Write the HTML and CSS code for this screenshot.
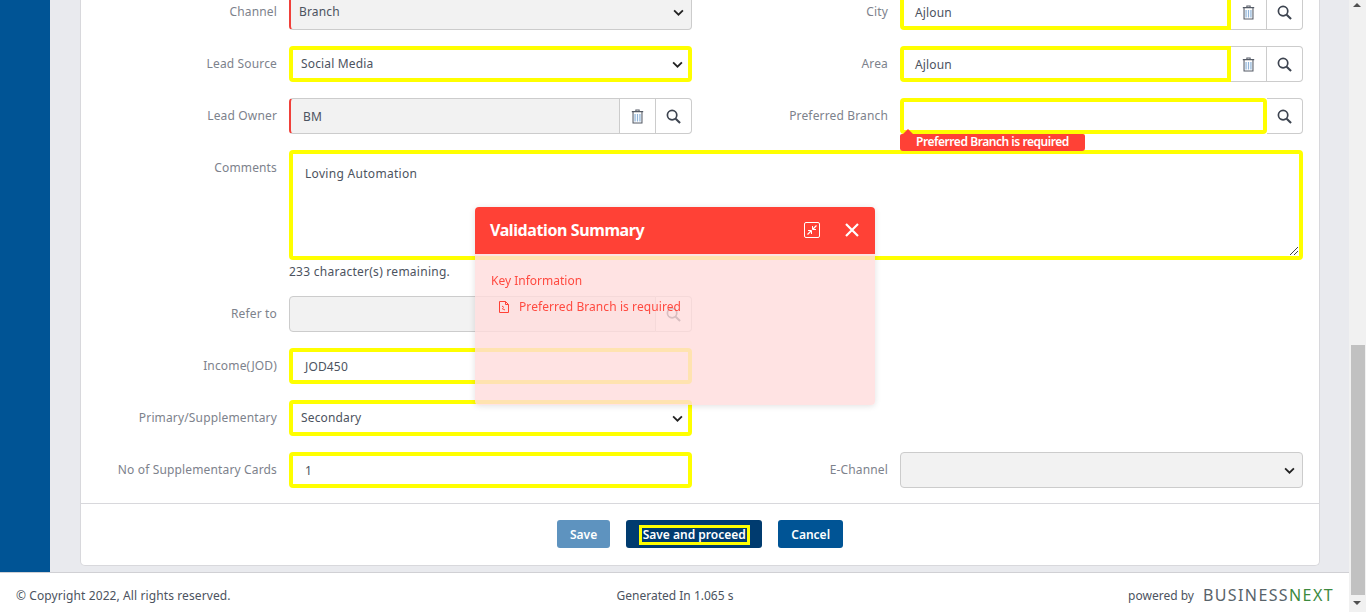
FILE: index.html
```html
<!DOCTYPE html>
<html lang="en">

<head>
    <meta charset="UTF-8">
    <meta name="viewport" content="width=device-width, initial-scale=1.0">
    <title>Lead</title>
    <link rel="stylesheet" href="styles.css">
</head>

<body>
    <svg class="sprite" aria-hidden="true">
        <symbol id="icon-trash" viewBox="0 0 16 18">
            <path d="M6 2.500V1h4v1.500M1 3h14M2.500 3.500V17h11V3.500" fill="none" stroke="#555b66" stroke-width="1.300" />
            <path d="M5 6v9M8 6v9M11 6v9" fill="none" stroke="#8fb4d9" stroke-width="1.500" />
        </symbol>
        <symbol id="icon-search" viewBox="0 0 16 16">
            <circle cx="6.500" cy="6.500" r="5" fill="none" stroke="#3d4450" stroke-width="1.800" />
            <path d="M10.300 10.300L15 15" fill="none" stroke="#3d4450" stroke-width="2.200" />
        </symbol>
        <symbol id="icon-chevron" viewBox="0 0 10 6">
            <path d="M1 1l4 4 4-4" fill="none" stroke="#222" stroke-width="1.600" />
        </symbol>
    </svg>

    <div class="app">
        <aside class="sidebar"></aside>

        <div class="main">
            <div class="content">
                <section class="card">
                    <form class="form-grid">
                        <label class="field-label">Channel</label>
                        <div class="control select required disabled">
                            <span class="value">Branch</span>
                            <svg class="chevron"><use href="#icon-chevron" /></svg>
                        </div>
                        <label class="field-label">City</label>
                        <div class="group">
                            <div class="control highlight flat"><span class="value lookup">Ajloun</span></div>
                            <button type="button" class="addon"><svg class="icon-trash"><use href="#icon-trash" /></svg></button>
                            <button type="button" class="addon end"><svg class="icon-search"><use href="#icon-search" /></svg></button>
                        </div>

                        <label class="field-label">Lead Source</label>
                        <div class="control select highlight">
                            <span class="value">Social Media</span>
                            <svg class="chevron"><use href="#icon-chevron" /></svg>
                        </div>
                        <label class="field-label">Area</label>
                        <div class="group">
                            <div class="control highlight flat"><span class="value lookup">Ajloun</span></div>
                            <button type="button" class="addon"><svg class="icon-trash"><use href="#icon-trash" /></svg></button>
                            <button type="button" class="addon end"><svg class="icon-search"><use href="#icon-search" /></svg></button>
                        </div>

                        <label class="field-label">Lead Owner</label>
                        <div class="group">
                            <div class="control required disabled flat"><span class="value lookup">BM</span></div>
                            <button type="button" class="addon"><svg class="icon-trash"><use href="#icon-trash" /></svg></button>
                            <button type="button" class="addon end"><svg class="icon-search"><use href="#icon-search" /></svg></button>
                        </div>
                        <label class="field-label">Preferred Branch</label>
                        <div class="group">
                            <div class="control highlight"></div>
                            <button type="button" class="addon end"><svg class="icon-search"><use href="#icon-search" /></svg></button>
                            <div class="error-tip">Preferred Branch is required</div>
                        </div>

                        <label class="field-label">Comments</label>
                        <div class="comments">
                            <div class="control highlight textarea">
                                <span class="value lookup">Loving Automation</span>
                                <svg class="resize" viewBox="0 0 8 8"><path d="M0 8L8 0M4 8l4-4" stroke="#444" fill="none" /></svg>
                            </div>
                            <p class="hint">233 character(s) remaining.</p>
                        </div>

                        <label class="field-label">Refer to</label>
                        <div class="group">
                            <div class="control disabled flat"></div>
                            <button type="button" class="addon end"><svg class="icon-search"><use href="#icon-search" /></svg></button>
                        </div>

                        <label class="field-label row-start">Income(JOD)</label>
                        <div class="control highlight"><span class="value lookup">JOD450</span></div>

                        <label class="field-label row-start">Primary/Supplementary</label>
                        <div class="control select highlight">
                            <span class="value">Secondary</span>
                            <svg class="chevron"><use href="#icon-chevron" /></svg>
                        </div>

                        <label class="field-label row-start">No of Supplementary Cards</label>
                        <div class="control highlight"><span class="value lookup">1</span></div>
                        <label class="field-label">E-Channel</label>
                        <div class="control select disabled">
                            <span class="value"></span>
                            <svg class="chevron"><use href="#icon-chevron" /></svg>
                        </div>
                    </form>

                    <div class="actions">
                        <button type="button" class="btn btn-muted">Save</button>
                        <button type="button" class="btn btn-dark"><span class="marked">Save and proceed</span></button>
                        <button type="button" class="btn">Cancel</button>
                    </div>
                </section>
            </div>

            <footer class="footer">
                <span class="copy">© Copyright 2022, All rights reserved.</span>
                <span class="generated">Generated In 1.065 s</span>
                <span class="powered">powered by <span class="brand">BUSINESS<span class="brand-next">NEXT</span></span></span>
            </footer>
        </div>

        <div class="scrollbar">
            <span class="arrow up"></span>
            <div class="track"><div class="thumb"></div></div>
            <span class="arrow down"></span>
        </div>
    </div>

    <div class="summary">
        <div class="summary-head">
            <h3>Validation Summary</h3>
            <svg class="head-icon" viewBox="0 0 16 16">
                <rect x="0.500" y="0.500" width="15" height="15" rx="1.500" fill="none" stroke="#fff" />
                <path d="M3.500 12.500L7 9M9 7l3.500-3.500" stroke="#fff" stroke-width="1.300" fill="none" />
                <path d="M4 8.500h3.500V12M8.500 4v3.500H12" stroke="#fff" fill="none" />
            </svg>
            <svg class="head-close" viewBox="0 0 14 14">
                <path d="M1 1l12 12M13 1L1 13" stroke="#fff" stroke-width="2.200" fill="none" />
            </svg>
        </div>
        <div class="summary-body">
            <h4>Key Information</h4>
            <p class="summary-item">
                <svg viewBox="0 0 10 12">
                    <path d="M.5.500h6l3 3v8h-9zM6.500.500v3h3" fill="none" stroke="#ff4136" />
                    <path d="M3 5l2 1.500M3 7.500l3 1.500" stroke="#ff4136" fill="none" />
                </svg>
                Preferred Branch is required
            </p>
        </div>
    </div>
</body>

</html>
```

FILE: styles.css
```css
* {
    box-sizing: border-box;
}

html,
body {
    height: 100%;
    margin: 0;
    overflow: hidden;
}

body {
    font-family: "Noto Sans", "Open Sans", sans-serif;
    font-size: 12px;
    color: #4c5360;
    background: #e9eaee;
}

.sprite {
    display: none;
}

.app {
    display: flex;
    height: 612px;
}

.sidebar {
    width: 50px;
    height: 572px;
    background: #005495;
    flex: none;
}

.main {
    flex: 1;
    min-width: 0;
    display: flex;
    flex-direction: column;
}

.content {
    flex: 1;
    min-height: 0;
    padding: 0 29px 0 30px;
}

.card {
    height: 566px;
    background: #fff;
    border: 1px solid #d8d8dc;
    border-top: 0;
    border-radius: 0 0 5px 5px;
    display: flex;
    flex-direction: column;
}

/* page is scrolled, first row is cut off at the top */
.form-grid {
    display: grid;
    grid-template-columns: 196px 403px 184px 403px;
    align-content: start;
    column-gap: 12px;
    row-gap: 16px;
    margin-top: -6px;
    height: 509px;
    flex: none;
}

.field-label {
    text-align: right;
    color: #7d828c;
    padding-top: 9px;
    line-height: 18px;
    letter-spacing: 0.15px;
}

.row-start {
    grid-column: 1;
}

.control {
    position: relative;
    flex: 1;
    height: 36px;
    display: flex;
    align-items: center;
    background: #fff;
    border: 1px solid #ccc;
    border-radius: 4px;
    min-width: 0;
}

.value {
    padding-left: 9px;
    letter-spacing: 0.15px;
}

.select .value {
    padding-bottom: 2px;
}

.value.lookup {
    padding-left: 11px;
}

.disabled {
    background: #f2f2f2;
}

.required {
    border-left: 2px solid #f0403a;
}

.required .value {
    padding-left: 8px;
}

.required .value.lookup {
    padding-left: 12px;
}

.highlight {
    border: 4px solid #ff0;
}

.highlight .value {
    padding-left: 8px;
}

.highlight .value.lookup {
    padding-left: 12px;
}

.group .highlight .value.lookup {
    padding-left: 11px;
}

.flat {
    border-top-right-radius: 0;
    border-bottom-right-radius: 0;
}

.select {
    justify-content: space-between;
}

.chevron {
    width: 11px;
    height: 7px;
    margin-right: 7px;
}

.highlight .chevron {
    margin-right: 5px;
}

.group {
    position: relative;
    display: flex;
}

.addon {
    width: 36px;
    height: 36px;
    flex: none;
    padding: 0;
    background: #fff;
    border: 1px solid #ccc;
    border-left: 0;
    display: flex;
    align-items: center;
    justify-content: center;
}

.addon.end {
    border-radius: 0 4px 4px 0;
}

.icon-trash {
    width: 13px;
    height: 15px;
}

.icon-search {
    width: 15px;
    height: 15px;
}

.error-tip {
    position: absolute;
    left: 0;
    top: 36px;
    width: 185px;
    height: 17px;
    padding-left: 16px;
    background: #ff4136;
    color: #fff;
    font-size: 12px;
    font-weight: 600;
    letter-spacing: -0.45px;
    line-height: 15px;
    border-radius: 2px 2px 3px 3px;
    z-index: 2;
}

.error-tip::before {
    content: "";
    position: absolute;
    left: 3px;
    top: -5px;
    border: 5px solid transparent;
    border-top: 0;
    border-bottom-color: #ff4136;
}

.comments {
    grid-column: 2 / 5;
    height: 130px;
}

.textarea {
    height: 110px;
    align-items: flex-start;
    padding-top: 11px;
}

.textarea .value.lookup {
    padding-left: 12px;
    letter-spacing: 0.3px;
}

.resize {
    position: absolute;
    right: 1px;
    bottom: 1px;
    width: 8px;
    height: 8px;
}

.hint {
    margin: 3px 0 0;
    line-height: 18px;
    letter-spacing: 0.26px;
}

.actions {
    border-top: 1px solid #d8d8dc;
    flex: 1;
    display: flex;
    justify-content: center;
    align-items: flex-start;
    gap: 16px;
    padding-top: 16px;
}

.btn {
    height: 28px;
    padding: 0 13px;
    font: 600 12px "Noto Sans", sans-serif;
    color: #fff;
    background: #005495;
    border: 0;
    border-radius: 3px;
}

.btn-muted {
    background: #5e93bf;
}

.btn-dark {
    padding: 0 15.500px;
    background: #003b6f;
}

.marked {
    display: inline-block;
    padding: 0 1px;
    outline: 3px solid #ff0;
    line-height: 14px;
}

.footer {
    height: 40px;
    flex: none;
    display: grid;
    grid-template-columns: 1fr auto 1fr;
    align-items: center;
    padding: 5px 15px 0 16px;
    background: #fff;
    border-top: 1px solid #d0d0d4;
    margin-left: -50px;
}

.copy {
    letter-spacing: 0.1px;
}

.powered {
    justify-self: end;
    display: flex;
    align-items: center;
    gap: 9px;
}

.brand {
    font-size: 16px;
    letter-spacing: 1.400px;
    color: #59636a;
}

.brand-next {
    color: #3c8a3e;
}

.scrollbar {
    width: 17px;
    flex: none;
    background: #f1f1f1;
    display: flex;
    flex-direction: column;
    align-items: center;
}

.track {
    flex: 1;
    width: 100%;
    display: flex;
    flex-direction: column;
    justify-content: flex-end;
}

.thumb {
    height: 250px;
    margin: 0 1px 0 2px;
    background: #c1c1c1;
}

.arrow {
    height: 17px;
    width: 100%;
    position: relative;
}

.arrow::after {
    content: "";
    position: absolute;
    left: 4px;
    border: 4px solid transparent;
}

.arrow.up::after {
    top: 3px;
    border-top: 0;
    border-bottom-color: #505050;
}

.arrow.down::after {
    top: 6px;
    border-bottom: 0;
    border-top-color: #505050;
}

.summary {
    position: fixed;
    left: 475px;
    top: 207px;
    width: 400px;
    height: 198px;
    border-radius: 4px;
    box-shadow: 0 1px 6px rgba(0, 0, 0, 0.12);
    overflow: hidden;
}

.summary-head {
    height: 47px;
    background: #ff4136;
    color: #fff;
    display: flex;
    align-items: center;
    padding: 0 15px 1px;
}

.summary-head h3 {
    flex: 1;
    margin: 0;
    font-size: 16px;
    font-weight: 700;
    letter-spacing: -0.4px;
}

.head-icon {
    width: 16px;
    height: 16px;
    margin-right: 25px;
}

.head-close {
    width: 14px;
    height: 14px;
    margin-right: 1px;
}

.summary-body {
    height: 151px;
    padding: 18px 16px;
    background: rgba(255, 220, 220, 0.8);
    color: #ff4a40;
}

.summary-body h4 {
    margin: 0;
    font-size: 12px;
    font-weight: 400;
    line-height: 18px;
}

.summary-item {
    margin: 8px 0 0 8px;
    line-height: 18px;
    display: flex;
    align-items: center;
    gap: 10px;
    letter-spacing: 0.08px;
}

.summary-item svg {
    width: 10px;
    height: 12px;
}
```
